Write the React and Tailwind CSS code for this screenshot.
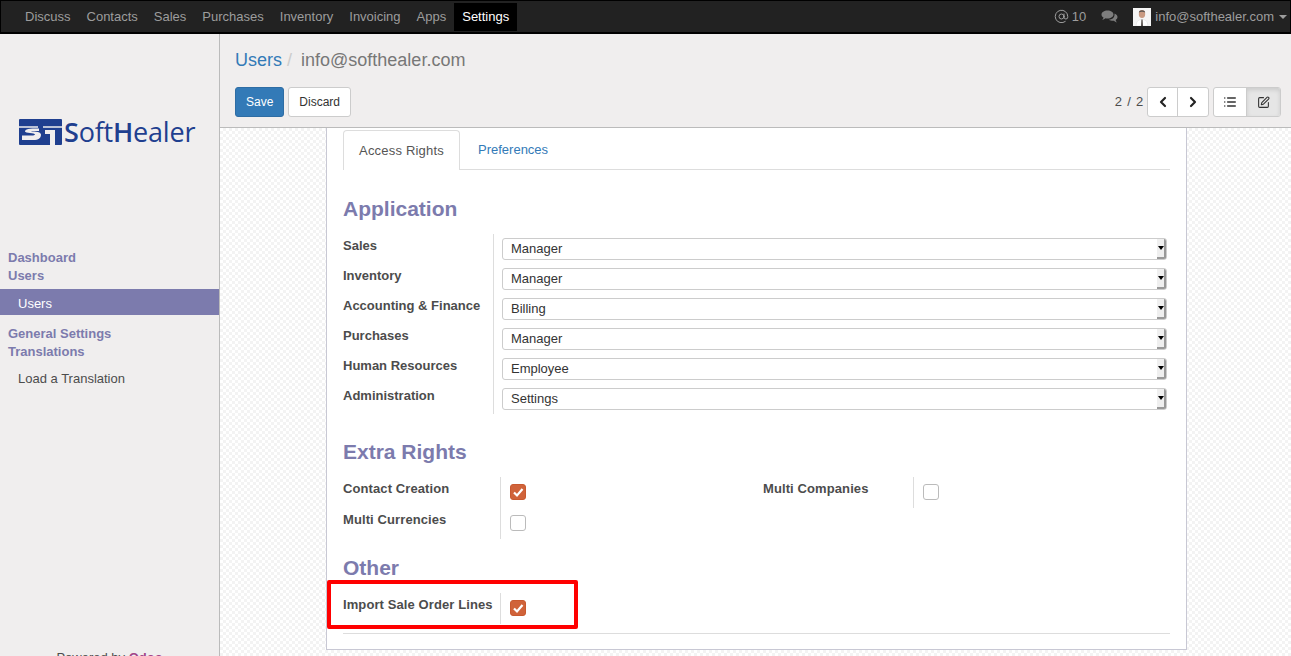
import React from "react";
import { AtSign, ChevronLeft, ChevronRight, List, SquarePen } from "lucide-react";

const navItems = ["Discuss", "Contacts", "Sales", "Purchases", "Inventory", "Invoicing", "Apps"];

const appRights = [
  ["Sales", "Manager"],
  ["Inventory", "Manager"],
  ["Accounting & Finance", "Billing"],
  ["Purchases", "Manager"],
  ["Human Resources", "Employee"],
  ["Administration", "Settings"],
];

const Check = ({ on }) => (
  <span
    className={
      on
        ? "flex w-4 h-4 items-center justify-center rounded-[3px] border border-[#c9592f] bg-[#d0633a]"
        : "block w-4 h-4 rounded-[3px] border border-[#bbb] bg-white"
    }
  >
    {on && (
      <svg width="12" height="12" viewBox="0 0 12 12">
        <path d="M2 6.5 L5 9.5 L10.5 3" fill="none" stroke="#fff" strokeWidth="2.2" />
      </svg>
    )}
  </span>
);

const Select = ({ value }) => (
  <div className="flex h-[22px] w-[665px] items-center justify-between rounded-[3px] border border-[#ccc] bg-white pl-2 text-[13px] text-[#333]">
    <span>{value}</span>
    <span className="flex h-full w-[9px] items-center justify-center rounded-r-[2px] border-r-2 border-b-2 border-[#999] bg-[#efefef]">
      <span className="block border-x-[3px] border-t-[4px] border-x-transparent border-t-black" />
    </span>
  </div>
);

const CheckRow = ({ label, on, labelWidth = "w-[157px]" }) => (
  <div className="flex h-[31px] items-start">
    <div className={`${labelWidth} pt-[3px] text-[13px] font-bold leading-[18px] tracking-[0.1px] text-[#4c4c4c]`}>{label}</div>
    <div className="flex h-[31px] items-center border-l border-[#ddd] pl-[9px] pb-[2px]">
      <Check on={on} />
    </div>
  </div>
);

const Heading = ({ children, className }) => (
  <h2 className={`text-[21px] font-bold leading-6 text-[#7c7bad] ${className}`}>{children}</h2>
);

export default function App() {
  return (
    <div className="relative flex h-[656px] w-[1291px] flex-col overflow-hidden bg-white font-['Liberation_Sans',Arial,sans-serif] text-[13px] text-[#4c4c4c]">
      {/* Navbar */}
      <header className="flex h-[34px] shrink-0 items-center justify-between border border-b-2 border-black bg-[#222]">
        <nav className="flex items-center pl-4">
          {navItems.map((item) => (
            <a key={item} className="px-2 text-[13px] text-[#9d9d9d]">
              {item}
            </a>
          ))}
          <a className="flex h-7 items-center bg-black px-2 text-[13px] text-white">Settings</a>
        </nav>
        <div className="flex items-center pr-[3px] text-[13px] text-[#9d9d9d]">
          <AtSign size={15} strokeWidth={1.6} className="mr-[3px]" />
          <span className="mr-[15px]">10</span>
          <svg width="17" height="14" viewBox="0 0 17 14" className="mr-[15px]" fill="#7d7d7d">
            <path d="M6.5 0.5 C10 0.5 12.5 2.2 12.5 4.5 C12.5 6.8 10 8.5 6.5 8.5 C5.8 8.5 5.2 8.4 4.6 8.3 C3.6 9.2 2.4 9.8 1.2 10 C2 9.2 2.4 8.4 2.5 7.5 C1.2 6.8 0.5 5.7 0.5 4.5 C0.5 2.2 3 0.5 6.5 0.5 Z" />
            <path d="M13.5 3.5 C15.4 4.2 16.5 5.5 16.5 7 C16.5 8.2 15.8 9.2 14.7 9.9 C14.8 10.8 15.2 11.6 16 12.4 C14.8 12.2 13.7 11.6 12.8 10.8 C11 11 9.2 10.6 8 9.7 C11 9.6 14 7.8 13.5 3.5 Z" />
          </svg>
          <svg width="18" height="18" viewBox="0 0 18 18" className="mr-1">
            <rect width="18" height="18" fill="#f5f5f5" />
            <ellipse cx="9" cy="6" rx="3.2" ry="4" fill="#c99a82" />
            <path d="M5.8 4.5 C6 1.5 12 1.5 12.2 4.5 C10.5 3.4 7.5 3.4 5.8 4.5 Z" fill="#5b5550" />
            <path d="M3 18 C3.5 12.5 6 11.5 9 11.5 C12 11.5 14.5 12.5 15 18 Z" fill="#fff" stroke="#ddd" strokeWidth="0.5" />
            <path d="M8.4 11.5 H9.6 L10 18 H8 Z" fill="#55504c" />
          </svg>
          <span>info@softhealer.com</span>
          <span className="ml-[5px] block border-x-4 border-t-4 border-x-transparent border-t-[#9d9d9d]" />
        </div>
      </header>

      <div className="flex min-h-0 flex-1">
        {/* Sidebar */}
        <aside className="relative flex w-[220px] shrink-0 flex-col border-r border-[#bbb] bg-[#f0eeee]">
          <div className="mt-[83px] ml-[19px] flex h-[30px] items-center">
            <svg width="43" height="26" viewBox="0 0 43 26">
              <rect width="43" height="26" rx="1" fill="#1f3f8f" />
              <path d="M0 8 H19 M24 8 H43" stroke="#f0eeee" strokeWidth="1.5" />
              <path d="M0 14 H14 L12 11 H20 V16 H7 L0 22 Z" fill="#f0eeee" opacity="0" />
              <path d="M20 9.5 C10 9.5 6 10 6 12.5 C6 14.5 16 13.5 16 15.5 C16 17 8 16.5 3 16.5 V21 H14 C20 21 22 19 22 15.5 C22 12 12 13 12 12 H20 Z" fill="#f0eeee" />
              <path d="M26 11 H36 V26 H31 V15 H26 Z" fill="#f0eeee" />
            </svg>
            <span className="ml-[2px] font-['Open_Sans',sans-serif] text-[27px] leading-[30px] tracking-[-0.2px] text-[#1f3f8f]">
              <span className="font-semibold">S</span>oft<span className="font-semibold">H</span>ealer
            </span>
          </div>

          <div className="mt-[102px] pl-2 text-[13px] font-bold leading-[18px] text-[#7c7bad]">
            <div>Dashboard</div>
            <div>Users</div>
          </div>
          <div className="mt-1 h-[26px] bg-[#7c7bad] pl-[18px] leading-[29px] text-white">Users</div>
          <div className="mt-[10px] pl-2 text-[13px] font-bold leading-[18px] text-[#7c7bad]">
            <div>General Settings</div>
            <div>Translations</div>
          </div>
          <div className="mt-[9px] pl-[18px] leading-[18px] text-[#4c4c4c]">Load a Translation</div>
          <div className="absolute left-0 right-0 top-[615px] text-center text-[13px] leading-[18px]">
            Powered by <span className="font-bold text-[#a24689]">Odoo</span>
          </div>
        </aside>

        <main className="flex min-w-0 flex-1 flex-col">
          {/* Control panel */}
          <div className="h-[94px] shrink-0 border-b border-[#bbb] bg-[#f0eeee] pl-[15px] pr-[10px]">
            <div className="flex h-[50px] items-center pt-[2px] text-[18px]">
              <a className="text-[#337ab7]">Users</a>
              <span className="ml-[5px] text-[#ccc]">/</span>
              <span className="ml-[9px] text-[#777]">info@softhealer.com</span>
            </div>
            <div className="mt-[3px] flex items-center justify-between">
              <div className="flex gap-1">
                <button className="h-[30px] rounded-[3px] border border-[#2e6da4] bg-[#337ab7] px-[10px] text-[12px] text-white">Save</button>
                <button className="h-[30px] rounded-[3px] border border-[#ccc] bg-white px-[10px] text-[12px] text-[#333]">Discard</button>
              </div>
              <div className="flex items-center">
                <span className="mr-[3px] tracking-[0.8px] text-[#4c4c4c]">2 / 2</span>
                <div className="flex h-[30px] rounded-[3px] border border-[#ccc] bg-white text-[#222]">
                  <span className="flex w-[30px] items-center justify-center border-r border-[#ccc]">
                    <ChevronLeft size={16} strokeWidth={3.2} />
                  </span>
                  <span className="flex w-[30px] items-center justify-center">
                    <ChevronRight size={16} strokeWidth={3.2} />
                  </span>
                </div>
                <div className="ml-1 flex h-[30px] rounded-[3px] border border-[#ccc] bg-white text-[#333]">
                  <span className="flex w-[33px] items-center justify-center border-r border-[#ccc]">
                    <List size={14} strokeWidth={2.6} />
                  </span>
                  <span className="flex w-[33px] items-center justify-center rounded-r-[2px] bg-[#e6e6e6] shadow-[inset_0_2px_4px_rgba(0,0,0,0.12)]">
                    <SquarePen size={13} strokeWidth={2} />
                  </span>
                </div>
              </div>
            </div>
          </div>

          {/* Form view */}
          <div className="min-h-0 flex-1 bg-[conic-gradient(#f3f3f3_25%,#fff_0_50%,#f3f3f3_0_75%,#fff_0)] bg-[length:6px_6px] pl-[106px]">
            <div className="h-[522px] w-[861px] border border-t-0 border-[#c8c8d4] bg-white px-4 pt-[2px]">
              {/* Tabs */}
              <div className="flex h-10 border-b border-[#ddd]">
                <div className="flex h-10 w-[117px] items-center justify-center rounded-t-[4px] border border-b-0 border-[#ddd] bg-white text-[13px] tracking-[0.2px] text-[#555]">
                  Access Rights
                </div>
                <div className="flex items-center pl-[18px] text-[13px] text-[#337ab7]">Preferences</div>
              </div>

              <Heading className="mt-[27px]">Application</Heading>
              <div className="mt-[13px] flex flex-col">
                {appRights.map(([label, value]) => (
                  <div key={label} className="flex h-[30px]">
                    <div className="w-[150px] pt-[3px] text-[13px] font-bold leading-[18px] text-[#4c4c4c]">{label}</div>
                    <div className="flex border-l border-[#ddd] pl-2 pt-1">
                      <Select value={value} />
                    </div>
                  </div>
                ))}
              </div>

              <Heading className="mt-[26px]">Extra Rights</Heading>
              <div className="mt-[13px] flex">
                <div className="w-[420px]">
                  <CheckRow label="Contact Creation" on />
                  <CheckRow label="Multi Currencies" />
                </div>
                <CheckRow label="Multi Companies" labelWidth="w-[150px]" />
              </div>

              <Heading className="mt-[17px]">Other</Heading>
              <div className="mt-[13px] border-b border-[#ddd] pb-[9px]">
                <CheckRow label="Import Sale Order Lines" on />
              </div>
            </div>
          </div>
        </main>
      </div>

      {/* Red annotation box */}
      <div className="absolute left-[327px] top-[580px] h-[49px] w-[251px] rounded-[2px] border-[4px] border-[#f00]" />
    </div>
  );
}
